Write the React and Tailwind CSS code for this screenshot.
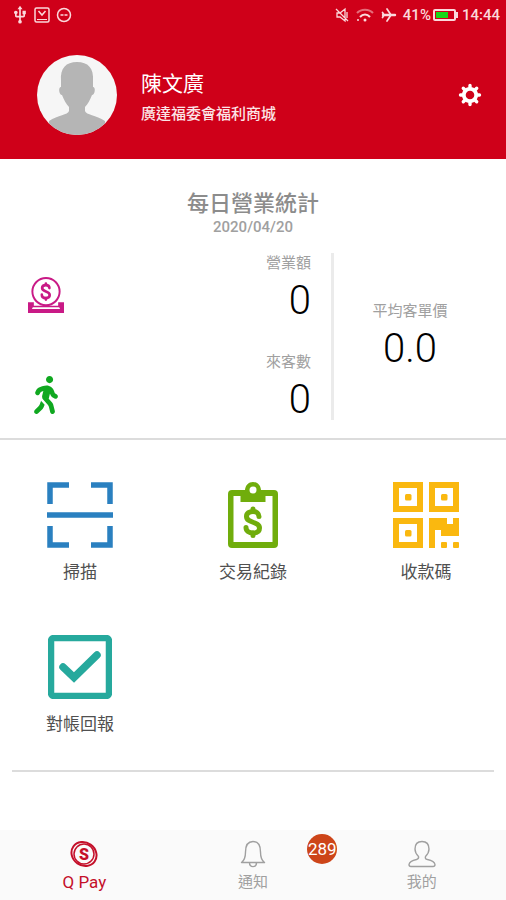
import { useState } from "react"
import { FaWalking } from "react-icons/fa"
import { MdUsb } from "react-icons/md"

const DollarPath = (props) => (
  <g fill="none" stroke="currentColor" strokeLinecap="round" {...props}>
    <path d="M15 9.500c0-3-2.500-5-6-5s-6.500 1.500-6.500 5c0 7 13 4.500 13 11.500 0 3.500-2.500 5-6.500 5s-7-2-7-5.500" />
    <path d="M9 4V2M9 26v2.500" />
  </g>
)

const ScanIcon = () => (
  <svg viewBox="0 0 66 66" className="w-[66px] h-[66px]" fill="none" stroke="#2a80c0" strokeWidth="5.500">
    <path d="M3 22V3H22M44 3H63V22M63 44V63H44M22 63H3V44M0 33H66" />
  </svg>
)

const RecordIcon = () => (
  <svg viewBox="0 0 50 66" className="w-[50px] h-[66px] text-[#70ad0c]">
    <path
      fill="currentColor"
      fillRule="evenodd"
      d="M4 8H17C17.500 3 20.500 0 25 0S32.500 3 33 8H46Q50 8 50 12V62Q50 66 46 66H4Q0 66 0 62V12Q0 8 4 8ZM5.500 14V60H44.500V14H37.500V20H12.500V14ZM25 4.500A3.500 3.500 0 1 0 25 11.500A3.500 3.500 0 1 0 25 4.500Z"
    />
    <DollarPath strokeWidth="5" transform="translate(16 25)" />
  </svg>
)

const QrIcon = () => (
  <svg viewBox="0 0 66 66" className="w-[66px] h-[66px]" fill="#fab80f">
    <path
      fillRule="evenodd"
      d="M0 0H30V30H0ZM6 6V24H24V6ZM36 0H66V30H36ZM42 6V24H60V6ZM0 36H30V66H0ZM6 42V60H24V42Z"
    />
    <path d="M36 36H54V42H60V36H66V54H48V48H42V66H36Z" />
    <rect x="12" y="12" width="6.500" height="6.500" rx="1.500" />
    <rect x="48" y="12" width="6.500" height="6.500" rx="1.500" />
    <rect x="12" y="48" width="6.500" height="6.500" rx="1.500" />
    <rect x="48" y="60" width="6" height="6" rx="1" />
    <rect x="60" y="60" width="6" height="6" rx="1" />
  </svg>
)

const CheckIcon = () => (
  <svg viewBox="0 0 64 64" className="w-16 h-16" fill="none" stroke="#26a99d">
    <rect x="3" y="3" width="58" height="58" rx="3" strokeWidth="6.500" />
    <path d="M15 32L26 42.500L49 20" strokeWidth="7.500" strokeLinecap="round" />
  </svg>
)

const CoinIcon = () => (
  <svg viewBox="0 0 37 37" className="w-9 h-9 text-[#c91a86]">
    <path fill="currentColor" d="M0 26H6V29.500H31V26H37V37H0Z" />
    <path fill="#fff" d="M5 31H32L33 33H4Z" />
    <circle cx="18.500" cy="15" r="14" fill="#fff" stroke="currentColor" strokeWidth="2" />
    <DollarPath strokeWidth="4.500" transform="translate(13 5.500) scale(.6 .62)" />
  </svg>
)

const GearIcon = () => (
  <svg viewBox="0 0 24 24" className="w-6 h-6" fill="none" stroke="currentColor">
    <circle cx="12" cy="12" r="6.200" strokeWidth="3.800" />
    <path
      d="M12 2.500V5M12 19V21.500M2.500 12H5M19 12H21.500M5.300 5.300L7 7M17 17L18.700 18.700M5.300 18.700L7 17M17 7L18.700 5.300"
      strokeWidth="3.400"
      strokeLinecap="round"
    />
  </svg>
)

const PayIcon = () => (
  <svg viewBox="0 0 28 28" className="w-7 h-7">
    <ellipse cx="14" cy="14" rx="13" ry="11.500" transform="rotate(35 14 14)" fill="none" stroke="currentColor" strokeWidth="2" />
    <circle cx="14" cy="14" r="10" fill="none" stroke="currentColor" strokeWidth="1.500" />
    <text x="14" y="19.500" textAnchor="middle" fontSize="16" fontWeight="900" fill="currentColor">S</text>
  </svg>
)

const BellIcon = () => (
  <svg viewBox="0 0 28 28" className="w-7 h-7" fill="none" stroke="currentColor" strokeWidth="1.400" strokeLinejoin="round">
    <path d="M2.500 22.500C6 20 6.500 17 6.500 12C6.500 5.500 9 1.500 14 1.500S21.500 5.500 21.500 12C21.500 17 22 20 25.500 22.500Z" />
    <path d="M10.500 22.500C10.500 28 17.500 28 17.500 22.500" />
  </svg>
)

const UserIcon = () => (
  <svg viewBox="0 0 28 28" className="w-7 h-7" fill="none" stroke="currentColor" strokeWidth="1.400" strokeLinejoin="round">
    <path d="M14 1.500C9.500 1.500 7 4.500 7 9C7 12.500 8.500 14.500 10.500 16.500C11 18.500 10.500 19 8.500 19.500C4 20.500 1.500 21.500 1 24.500Q1 26.500 3 26.500H25Q27 26.500 27 24.500C26.500 21.500 24 20.500 19.500 19.500C17.500 19 17 18.500 17.500 16.500C19.500 14.500 21 12.500 21 9C21 4.500 18.500 1.500 14 1.500Z" />
  </svg>
)

const Avatar = () => (
  <svg viewBox="0 0 80 80" className="w-20 h-20 rounded-full bg-[#f6f6f6]" fill="#b5b5b5">
    <path d="M40 7C29 7 23 13 24 26V32C21 32 22 40 25 40C27 45 29 49 32 52V56C31 60 21 60 12 66V80H68V66C59 60 49 60 48 56V52C51 49 53 45 55 40C58 40 59 32 56 32V26C57 13 51 7 40 7Z" />
  </svg>
)

const StatusBar = () => (
  <div className="h-[30px] px-[6px] flex items-center justify-between text-[#fbd9dc]">
    <div className="flex items-center gap-1 pl-1">
      <MdUsb className="w-5 h-5" />
      <svg viewBox="0 0 16 16" className="w-4 h-4" fill="none" stroke="currentColor" strokeWidth="1.500">
        <rect x="1" y="1" width="14" height="14" rx="1.500" />
        <path d="M4.500 4L8 8L11.500 4" />
        <path d="M3 12.500H13" strokeWidth="1" />
      </svg>
      <svg viewBox="0 0 16 16" className="w-4 h-4 ml-[2px]" fill="none" stroke="currentColor" strokeWidth="1.500">
        <circle cx="8" cy="8" r="6.500" />
        <path d="M4.500 8H11.500" strokeDasharray="3 1" />
      </svg>
    </div>
    <div className="flex items-center text-[15px] leading-5 font-medium">
      <svg viewBox="0 0 16 16" className="w-4 h-4 mr-[6px]" fill="none" stroke="currentColor" strokeWidth="1.300">
        <path d="M2 2L14 14M3 6V10H6L11 14V2L6 6ZM13 5V11" />
      </svg>
      <svg viewBox="0 0 18 14" className="w-[18px] h-[14px] mr-[7px]" fill="none" stroke="currentColor" strokeWidth="2">
        <path d="M1 5C5 .500 13 .500 17 5" opacity=".5" />
        <path d="M4 9C7 5.500 11 5.500 14 9" />
        <circle cx="9" cy="12" r="1.500" fill="currentColor" stroke="none" />
        <circle cx="2" cy="12" r="1" fill="currentColor" stroke="none" />
      </svg>
      <svg viewBox="0 0 16 16" className="w-4 h-4 mr-[6px]" fill="none" stroke="currentColor" strokeLinecap="round">
        <path d="M2 8H14" strokeWidth="2.400" />
        <path d="M10 8L6 2M10 8L6 14M3 8L1.500 5.500M3 8L1.500 10.500" strokeWidth="1.700" />
      </svg>
      <span>41%</span>
      <div className="ml-[2px] w-[23px] h-3 border-2 border-current p-px rounded-xs">
        <div className="w-3 h-full bg-[#17d817]" />
      </div>
      <div className="w-[2px] h-[6px] bg-current mr-1" />
      <span>14:44</span>
    </div>
  </div>
)

const Figure = ({ label, value }) => (
  <div>
    <p className="text-[15px] leading-5 text-[#a0a0a0]">{label}</p>
    <p className="mt-2 text-[40px] leading-10 font-light text-black">{value}</p>
  </div>
)

const actions = [
  { label: "掃描", icon: <ScanIcon /> },
  { label: "交易紀錄", icon: <RecordIcon /> },
  { label: "收款碼", icon: <QrIcon /> },
  { label: "對帳回報", icon: <CheckIcon /> },
]

const tabs = [
  { id: "pay", label: "Q Pay", icon: <PayIcon /> },
  { id: "notice", label: "通知", icon: <BellIcon />, badge: 289 },
  { id: "mine", label: "我的", icon: <UserIcon /> },
]

const App = () => {
  const [tab, setTab] = useState("pay")

  return (
    <div className="min-h-screen flex flex-col bg-white font-[Roboto,'Noto_Sans_CJK_TC',sans-serif]">
      <header className="bg-[#cf0019] text-white">
        <StatusBar />
        <div className="h-[129px] pl-[37px] pr-6 flex items-center">
          <Avatar />
          <div className="ml-6 pt-[6px] flex-1">
            <h1 className="text-[21px] leading-8">陳文廣</h1>
            <p className="text-[15px] leading-7 font-medium text-[#fce4e6]">廣達福委會福利商城</p>
          </div>
          <button type="button" aria-label="設定">
            <GearIcon />
          </button>
        </div>
      </header>

      <main className="flex-1">
        <section className="pt-8 pb-[18px] border-b-2 border-[#dcdcdc]">
          <h2 className="text-[22px] leading-[26px] font-medium text-center text-[#8c8c8c]">每日營業統計</h2>
          <p className="text-[15px] leading-5 font-medium text-center text-[#a0a0a0]">2020/04/20</p>
          <div className="mt-4 flex">
            <div className="w-[66%] pl-7 pr-5 flex flex-col gap-[31px] border-r-3 border-[#ebebeb]">
              <div className="flex justify-between text-right">
                <div className="w-9 pt-6 flex justify-center items-start">
                  <CoinIcon />
                </div>
                <Figure label="營業額" value="0" />
              </div>
              <div className="flex justify-between text-right">
                <div className="w-9 pt-6 flex justify-center items-start">
                  <FaWalking className="w-9 h-[38px] text-[#10a820]" />
                </div>
                <Figure label="來客數" value="0" />
              </div>
            </div>
            <div className="flex-1 pr-5 pb-1 flex items-center justify-center text-center">
              <Figure label="平均客單價" value="0.0" />
            </div>
          </div>
        </section>

        <section className="mx-3 px-8 pt-[42px] pb-8 grid grid-cols-[repeat(3,72px)] justify-between gap-y-12 border-b-2 border-[#dcdcdc]">
          {actions.map((a) => (
            <button key={a.label} type="button" className="flex flex-col items-center">
              <span className="h-[66px] flex items-center">{a.icon}</span>
              <span className="mt-[10px] text-[17px] leading-7 whitespace-nowrap text-[#505050]">{a.label}</span>
            </button>
          ))}
        </section>
      </main>

      <nav className="h-[70px] grid grid-cols-3 bg-[#fafafa]">
        {tabs.map((t) => (
          <button
            key={t.id}
            type="button"
            onClick={() => setTab(t.id)}
            className={`relative pt-[10px] flex flex-col items-center ${tab === t.id ? "text-[17px] text-[#c4102a]" : "text-[15px] text-[#a0a0a0]"}`}
          >
            {t.icon}
            <span className="mt-1 leading-5">{t.label}</span>
            {t.badge && (
              <span className="absolute top-1 right-0 w-[30px] h-[30px] rounded-full bg-[#cd4519] text-white text-[17px] leading-[30px] text-center">
                {t.badge}
              </span>
            )}
          </button>
        ))}
      </nav>
    </div>
  )
}

export default App
